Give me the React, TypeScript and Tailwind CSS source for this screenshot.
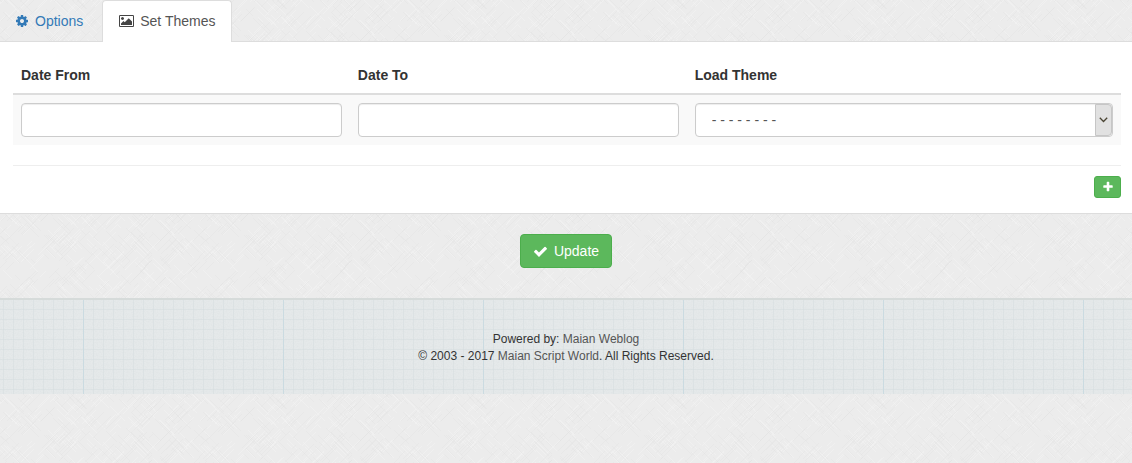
import { useState, type ReactNode } from "react";

const COG =
  "M1152 896q0-106-75-181t-181-75-181 75-75 181 75 181 181 75 181-75 75-181zm512-109v222q0 12-8 23t-20 13l-185 28q-19 54-39 91 35 50 107 138 10 12 10 25t-9 23q-27 37-99 108t-94 71q-12 0-26-9l-138-108q-44 23-91 38-16 136-29 186-7 28-36 28h-222q-14 0-24.5-8.5t-11.500-21.500l-28-184q-49-16-90-37l-141 107q-10 9-25 9-14 0-25-11-126-114-165-168-7-10-7-23 0-12 8-23 15-21 51-66.500t54-70.500q-27-50-41-99l-183-27q-13-2-21-12.500t-8-23.500v-222q0-12 8-23t19-13l186-28q14-46 39-92-40-57-107-138-10-12-10-24 0-10 9-23 26-36 98.500-107.500t94.500-71.500q13 0 26 10l138 107q44-23 91-38 16-136 29-186 7-28 36-28h222q14 0 24.500 8.500t11.500 21.500l28 184q49 16 90 37l142-107q9-9 24-9 13 0 25 10 129 119 165 170 7 8 7 22 0 12-8 23-15 21-51 66.500t-54 70.500q26 50 41 98l183 28q13 2 21 12.500t8 23.500z";
const IMAGE =
  "M576 576q0 80-56 136t-136 56-136-56-56-136 56-136 136-56 136 56 56 136zm1024 384v448h-1408v-192l320-320 160 160 512-512zm96-704h-1600q-13 0-22.500 9.500t-9.500 22.500v1216q0 13 9.500 22.500t22.500 9.500h1600q13 0 22.500-9.500t9.500-22.500v-1216q0-13-9.500-22.500t-22.500-9.500zm160 32v1216q0 66-47 113t-113 47h-1600q-66 0-113-47t-47-113v-1216q0-66 47-113t113-47h1600q66 0 113 47t47 113z";
const PLUS =
  "M1600 736v192q0 40-28 68t-68 28h-416v416q0 40-28 68t-68 28h-192q-40 0-68-28t-28-68v-416h-416q-40 0-68-28t-28-68v-192q0-40 28-68t68-28h416v-416q0-40 28-68t68-28h192q40 0 68 28t28 68v416h416q40 0 68 28t28 68z";
const CHECK =
  "M1671 566q0 40-28 68l-724 724-136 136q-28 28-68 28t-68-28l-136-136-362-362q-28-28-28-68t28-68l136-136q28-28 68-28t68 28l294 295 656-657q28-28 68-28t68 28l136 136q28 28 28 68z";

function Icon({ d, viewBox = "0 0 1792 1792", className }: { d: string; viewBox?: string; className: string }) {
  return (
    <svg viewBox={viewBox} className={className} fill="currentColor" aria-hidden="true">
      <path d={d} />
    </svg>
  );
}

const TILE = 200;

// Repeatable scatter of short diagonal strokes, wrapped at the tile's edges.
function makeStrokes(count: number) {
  let seed = 7;
  const next = () => {
    seed = (seed * 16807) % 2147483647;
    return seed / 2147483647;
  };
  let light = "";
  let dark = "";
  for (let i = 0; i < count; i++) {
    const x = Math.floor(next() * TILE);
    const y = Math.floor(next() * TILE);
    const length = 4 + Math.floor(next() * 13);
    const direction = next() > 0.5 ? 1 : -1;
    let segment = "";
    for (const ox of [-TILE, 0, TILE]) {
      for (const oy of [-TILE, 0]) {
        segment += `M${x + ox} ${y + oy}l${length * direction} ${length}`;
      }
    }
    if (next() > 0.5) light += segment;
    else dark += segment;
  }
  return { light, dark };
}

const strokes = makeStrokes(1000);

function PaperTexture() {
  return (
    <svg className="absolute inset-0 h-full w-full" aria-hidden="true">
      <defs>
        <pattern id="paper" width={TILE} height={TILE} patternUnits="userSpaceOnUse">
          <path d={strokes.light} stroke="#f4f4f4" strokeOpacity="0.4" fill="none" />
          <path d={strokes.dark} stroke="#e0e0e0" strokeOpacity="0.4" fill="none" />
        </pattern>
      </defs>
      <rect width="100%" height="100%" fill="url(#paper)" />
    </svg>
  );
}

function GraphTexture() {
  return (
    <svg className="absolute inset-0 h-full w-full" aria-hidden="true">
      <defs>
        <filter id="grain" x="0" y="0" width="100%" height="100%">
          <feTurbulence type="fractalNoise" baseFrequency="0.8" numOctaves="2" seed="4" />
          <feColorMatrix values="0 0 0 0 0.72  0 0 0 0 0.75  0 0 0 0 0.76  1 0 0 0 -0.35" />
        </filter>
        <pattern id="graph" x="3" y="9" width="10" height="10" patternUnits="userSpaceOnUse">
          <path d="M0.5 0V10M0 0.5H10" stroke="#d3dddf" strokeOpacity="0.45" fill="none" />
        </pattern>
        <pattern id="rule" x="83" width="200" height="10" patternUnits="userSpaceOnUse">
          <path d="M0.5 0V10" stroke="#cbdbe1" fill="none" />
        </pattern>
      </defs>
      <rect width="100%" height="100%" filter="url(#grain)" />
      <rect width="100%" height="100%" fill="url(#graph)" />
      <rect width="100%" height="100%" fill="url(#rule)" />
    </svg>
  );
}

function Tab({ active, onClick, children }: { active: boolean; onClick: () => void; children: ReactNode }) {
  return (
    <button
      type="button"
      role="tab"
      aria-selected={active}
      onClick={onClick}
      className={
        active
          ? "-mb-px flex h-[42px] items-center gap-1.5 rounded-t border border-b-0 border-[#ddd] bg-white px-4 pb-0.5 text-[#555]"
          : "flex h-[41px] items-center gap-1.5 px-4 text-[#337ab7]"
      }
    >
      {children}
    </button>
  );
}

const field =
  "block h-[34px] w-full rounded border border-[#ccc] bg-white text-sm text-[#555] shadow-[inset_0_1px_1px_rgba(0,0,0,0.075)] outline-none focus:border-[#66afe9]";

export default function App() {
  const [tab, setTab] = useState("themes");
  const [rows, setRows] = useState([0]);

  return (
    <div className="relative min-h-screen bg-[#ececec] font-['Liberation_Sans',Arial,sans-serif] text-sm text-[#333]">
      <PaperTexture />
      <div className="relative">
        <div role="tablist" className="flex h-[42px] items-start gap-[3px] border-b border-[#ddd]">
          <div className="-ml-px flex">
            <Tab active={tab === "options"} onClick={() => setTab("options")}>
              <Icon d={COG} className="h-3.5 w-3.5" />
              Options
            </Tab>
          </div>
          <Tab active={tab === "themes"} onClick={() => setTab("themes")}>
            <Icon d={IMAGE} viewBox="-64 0 1920 1792" className="h-3.5 w-[15px] text-[#444]" />
            Set Themes
          </Tab>
        </div>

        <main className="border-b border-[#ddd] bg-white pt-[15px] pr-[11px] pb-[15px] pl-[13px]">
          <table className="w-full table-fixed border-collapse">
            <colgroup>
              <col className="w-[30.4%]" />
              <col className="w-[30.4%]" />
              <col />
            </colgroup>
            <thead>
              <tr className="text-left">
                <th className="border-b-2 border-[#ddd] p-2 leading-5">Date From</th>
                <th className="border-b-2 border-[#ddd] p-2 leading-5">Date To</th>
                <th className="border-b-2 border-[#ddd] p-2 leading-5">Load Theme</th>
              </tr>
            </thead>
            <tbody>
              {rows.map((id) => (
                <tr key={id} className="bg-[#f9f9f9]">
                  <td className="p-2">
                    <input type="text" aria-label="Date From" className={`${field} px-3`} />
                  </td>
                  <td className="p-2">
                    <input type="text" aria-label="Date To" className={`${field} px-3`} />
                  </td>
                  <td className="p-2">
                    <div className="relative">
                      <select aria-label="Load Theme" className={`${field} appearance-none pr-6 pl-4`}>
                        <option>- - - - - - - -</option>
                      </select>
                      <span className="pointer-events-none absolute inset-y-px right-px flex w-[17px] items-center justify-center rounded-r-sm border border-[#c6c6c6] bg-[#e1e1e1]">
                        <svg viewBox="0 0 9 6" className="h-1.5 w-[9px]" aria-hidden="true">
                          <path d="M0.8 0.8L4.5 4.5L8.2 0.8" fill="none" stroke="#4a4433" strokeWidth="1.3" />
                        </svg>
                      </span>
                    </div>
                  </td>
                </tr>
              ))}
            </tbody>
          </table>
          <div className="mt-5 flex justify-end border-t border-[#eee] pt-2.5">
            <button
              type="button"
              aria-label="Add row"
              onClick={() => setRows([...rows, rows.length])}
              className="flex h-[22px] w-[27px] items-center justify-center rounded-[3px] border border-[#4cae4c] bg-[#5cb85c] text-white"
            >
              <Icon d={PLUS} className="h-3 w-3" />
            </button>
          </div>
        </main>

        <div className="flex justify-center pt-5 pb-[30px]">
          <button
            type="button"
            className="flex h-[34px] items-center gap-1.5 rounded border border-[#4cae4c] bg-[#5cb85c] px-3 text-white"
          >
            <Icon d={CHECK} className="h-[15px] w-[15px]" />
            Update
          </button>
        </div>

        <footer className="border-t-2 border-[#d6dbda] bg-[#e5e9ea]">
          <div className="relative">
            <GraphTexture />
            <div className="relative px-4 pt-[31px] pb-[29px] text-center text-xs leading-[17px]">
              <p>
                Powered by:{" "}
                <a href="#weblog" className="text-[#555]">
                  Maian Weblog
                </a>
              </p>
              <p>
                © 2003 - 2017{" "}
                <a href="#world" className="text-[#555]">
                  Maian Script World
                </a>
                . All Rights Reserved.
              </p>
            </div>
          </div>
        </footer>
      </div>
    </div>
  );
}
